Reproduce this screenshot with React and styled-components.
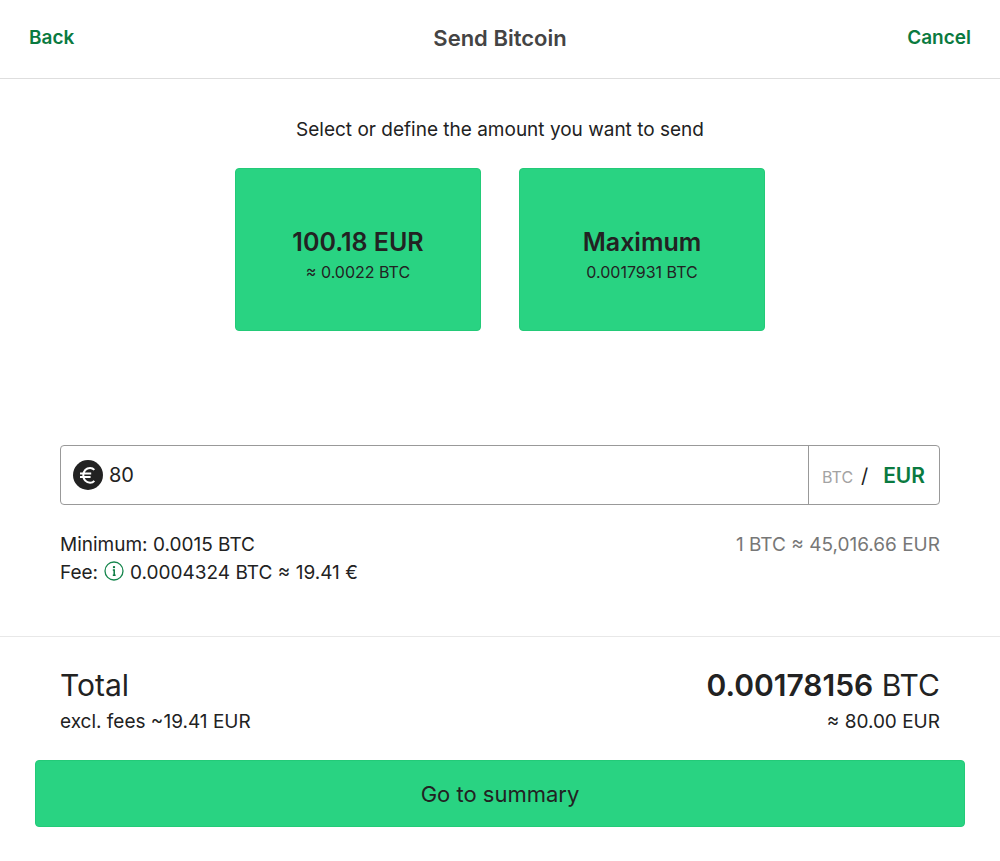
import React, { useState } from "react";
import styled, { createGlobalStyle } from "styled-components";

const GlobalStyle = createGlobalStyle`
  *, *::before, *::after { box-sizing: border-box; }
  body {
    margin: 0;
    background: #fff;
    color: #222;
    font-family: Inter, "Liberation Sans", sans-serif;
    font-size: 19px;
    line-height: 28px;
  }
  button, input { font: inherit; color: inherit; }
  button { cursor: pointer; }
  h1, p { margin: 0; }
`;

const Header = styled.header`
  display: grid;
  grid-template-columns: 1fr auto 1fr;
  align-items: center;
  height: 79px;
  padding: 0 29px 3px;
  border-bottom: 1px solid #dedede;
`;

const HeaderAction = styled.button`
  justify-self: ${({ $end }) => ($end ? "end" : "start")};
  padding: 0;
  border: 0;
  background: none;
  color: #0a7a40;
  font-weight: 600;
`;

const Title = styled.h1`
  color: #444;
  font-size: 22px;
  font-weight: 600;
`;

const Amount = styled.main`
  padding: 37px 60px 49px;
  border-bottom: 1px solid #e8e8e8;
`;

const Prompt = styled.p`
  text-align: center;
`;

const Presets = styled.div`
  display: flex;
  justify-content: center;
  gap: 38px;
  margin: 24px 0 114px;
`;

const Preset = styled.button`
  display: flex;
  flex-direction: column;
  align-items: center;
  justify-content: center;
  width: 246px;
  height: 163px;
  padding: 12px 0 0;
  border: 1px solid #23ca78;
  border-radius: 4px;
  background: #29d382;
`;

const PresetValue = styled.strong`
  font-size: 25px;
  font-weight: 600;
  line-height: 32px;
`;

const PresetNote = styled.span`
  font-size: 16px;
`;

const Field = styled.div`
  display: flex;
  height: 60px;
  border: 1px solid #999;
  border-radius: 4px;
`;

const FieldLabel = styled.label`
  display: flex;
  flex: 1;
  align-items: center;
  gap: 6px;
  min-width: 0;
  padding-left: 12px;
`;

const AmountInput = styled.input`
  flex: 1;
  min-width: 0;
  height: 100%;
  padding: 0;
  border: 0;
  outline: 0;
  background: none;
  font-size: 20px;
`;

const UnitSwitch = styled.div`
  display: flex;
  align-items: baseline;
  width: 131px;
  padding: 16px 14px 0 13px;
  border-left: 1px solid #999;
  font-size: 20px;
`;

const Slash = styled.span`
  margin: 0 auto 0 8px;
`;

const Unit = styled.button`
  padding: 0;
  border: 0;
  background: none;
  color: ${({ $active }) => ($active ? "#0a7a40" : "#a3a3a3")};
  font-size: ${({ $active }) => ($active ? "21px" : "16px")};
  font-weight: ${({ $active }) => ($active ? 600 : 400)};
`;

const Details = styled.div`
  display: flex;
  justify-content: space-between;
  margin-top: 26px;
`;

const Rate = styled.p`
  color: #777;
`;

const Fee = styled.p`
  display: flex;
  align-items: center;
  gap: 6px;
`;

const InfoButton = styled.button`
  display: flex;
  padding: 0 0 4px;
  border: 0;
  background: none;
`;

const Footer = styled.footer`
  padding: 28px 35px 34px;
`;

const Totals = styled.div`
  display: flex;
  justify-content: space-between;
  padding: 0 25px;
`;

const TotalColumn = styled.div`
  text-align: ${({ $end }) => ($end ? "right" : "left")};
`;

const TotalLine = styled.p`
  font-size: 30px;
  line-height: 40px;
`;

const TotalValue = styled.strong`
  font-weight: 600;
`;

const TotalNote = styled.p`
  margin-top: 3px;
`;

const Submit = styled.button`
  display: block;
  width: 100%;
  height: 67px;
  margin-top: 24px;
  padding: 0;
  border: 1px solid #23ca78;
  border-radius: 4px;
  background: #29d382;
  font-size: 22px;
`;

const EuroIcon = () => (
  <svg width="30" height="30" viewBox="0 0 30 30" fill="none" aria-hidden="true">
    <circle cx="15" cy="15" r="15" fill="#222" />
    <path
      d="M21.3 9.9C20.3 8.7 18.8 8 17.1 8C13.2 8 10.3 11 10.3 15.3C10.3 19.7 13.2 22.7 17.1 22.7C18.8 22.7 20.3 22 21.3 20.8M7 13.6H18.2M7 17H17.6"
      stroke="#fff"
      strokeWidth="2"
    />
  </svg>
);

const InfoIcon = () => (
  <svg width="20" height="20" viewBox="0 0 20 20" fill="none" aria-hidden="true">
    <circle cx="10" cy="10" r="9" stroke="#16864d" strokeWidth="1.3" />
    <circle cx="10" cy="6.1" r="1.2" fill="#0a7a40" />
    <path d="M8.8 9H10.2V14.2M8.8 14.2H11.6" stroke="#0a7a40" strokeWidth="1.5" />
  </svg>
);

export default function App() {
  const [amount, setAmount] = useState("80");

  return (
    <>
      <GlobalStyle />
      <Header>
        <HeaderAction type="button">Back</HeaderAction>
        <Title>Send Bitcoin</Title>
        <HeaderAction type="button" $end>Cancel</HeaderAction>
      </Header>
      <Amount>
        <Prompt>Select or define the amount you want to send</Prompt>
        <Presets>
          <Preset type="button">
            <PresetValue>100.18 EUR</PresetValue>
            <PresetNote>≈ 0.0022 BTC</PresetNote>
          </Preset>
          <Preset type="button">
            <PresetValue>Maximum</PresetValue>
            <PresetNote>0.0017931 BTC</PresetNote>
          </Preset>
        </Presets>
        <Field>
          <FieldLabel htmlFor="amount">
            <EuroIcon />
            <AmountInput
              id="amount"
              aria-label="Amount in EUR"
              inputMode="decimal"
              value={amount}
              onChange={(e) => setAmount(e.target.value)}
            />
          </FieldLabel>
          <UnitSwitch>
            <Unit type="button">BTC</Unit>
            <Slash>/</Slash>
            <Unit type="button" $active>EUR</Unit>
          </UnitSwitch>
        </Field>
        <Details>
          <div>
            <p>Minimum: 0.0015 BTC</p>
            <Fee>
              <span>Fee:</span>
              <InfoButton type="button" aria-label="About the fee">
                <InfoIcon />
              </InfoButton>
              <span>0.0004324 BTC ≈ 19.41 €</span>
            </Fee>
          </div>
          <Rate>1 BTC ≈ 45,016.66 EUR</Rate>
        </Details>
      </Amount>
      <Footer>
        <Totals>
          <TotalColumn>
            <TotalLine>Total</TotalLine>
            <TotalNote>excl. fees ~19.41 EUR</TotalNote>
          </TotalColumn>
          <TotalColumn $end>
            <TotalLine>
              <TotalValue>0.00178156</TotalValue> BTC
            </TotalLine>
            <TotalNote>≈ 80.00 EUR</TotalNote>
          </TotalColumn>
        </Totals>
        <Submit type="button">Go to summary</Submit>
      </Footer>
    </>
  );
}
